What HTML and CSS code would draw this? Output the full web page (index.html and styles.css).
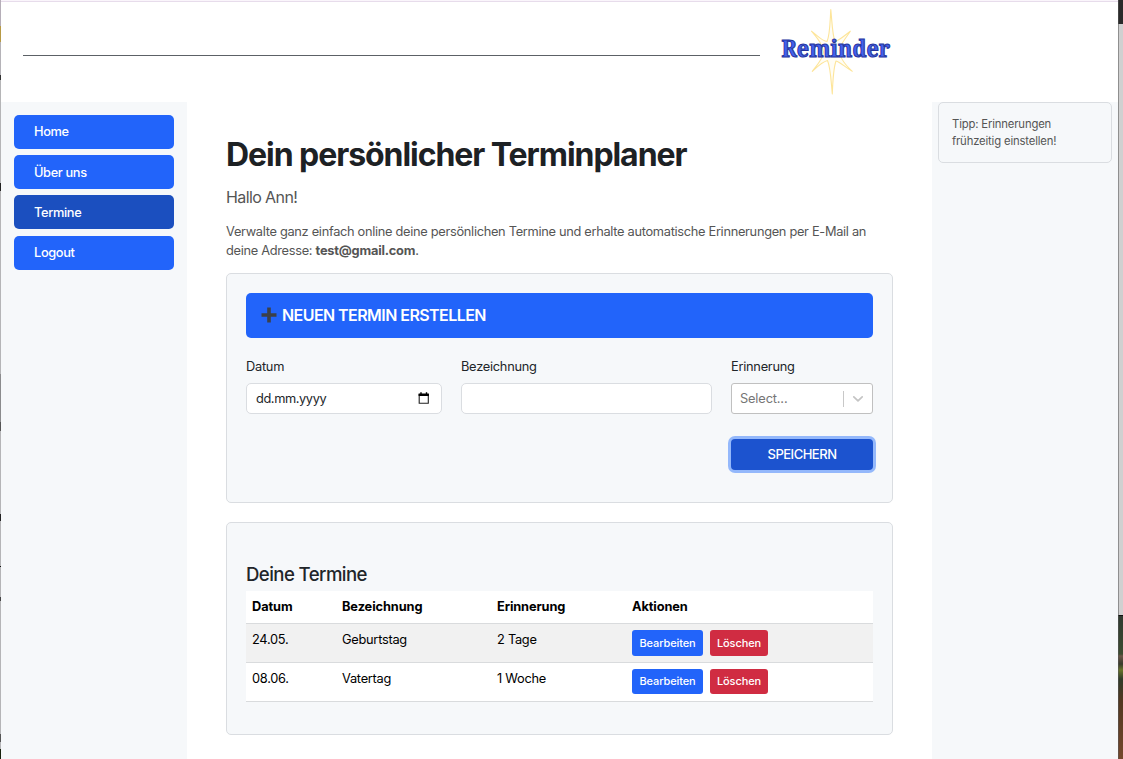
FILE: index.html
```html
<!DOCTYPE html>
<html lang="de">
<head>
<meta charset="utf-8">
<title>Reminder</title>
<link rel="stylesheet" href="styles.css">
</head>
<body>
<div class="edge-left"></div>
<div class="window">
  <header class="header">
    <div class="rule"></div>
    <svg class="logo" width="170" height="96" viewBox="770 4 170 96" role="img" aria-label="Reminder">
      <path class="star" d="M830.8 9.5C832 22 832.500 36 835 41.500C840 40 845 35 850.300 31.200C846 38 842 42 840 48C838.500 54 841 61 852.300 71.300C845 67 840 62 836 61C833.500 68 832.800 80 832.300 94C831 80 830.500 67 827.500 60.500C822 62 817 67 812.300 71.300C817 65 823 59 823.500 52C822 43 817 38 811.500 31.200C817 35 822 41 827 41.500C830 35 830 22 830.800 9.500Z"/>
      <text class="wordmark" x="781.5" y="57.300" textLength="108.500" lengthAdjust="spacingAndGlyphs">Reminder</text>
    </svg>
  </header>
  <div class="columns">
    <nav class="sidebar">
      <a class="nav-item">Home</a>
      <a class="nav-item">Über uns</a>
      <a class="nav-item active">Termine</a>
      <a class="nav-item">Logout</a>
    </nav>
    <main class="main">
      <h1 class="title">Dein persönlicher Terminplaner</h1>
      <p class="greeting">Hallo Ann!</p>
      <p class="intro">Verwalte ganz einfach online deine persönlichen Termine und erhalte automatische Erinnerungen per E-Mail an<br>deine Adresse: <strong>test@gmail.com</strong>.</p>
      <section class="card form-card">
        <div class="banner">
          <svg class="plus" width="16" height="16" viewBox="0 0 16 16"><path d="M6.200 .5h3.600v5.700h5.700v3.600H9.800v5.700H6.200V9.800H.5V6.200h5.700z"/></svg>
          <span class="banner-text">NEUEN TERMIN ERSTELLEN</span>
        </div>
        <div class="fields">
          <div class="field">
            <div class="label">Datum</div>
            <div class="input"><span class="date-text">dd.mm.yyyy</span>
              <svg width="12" height="13" viewBox="0 0 12 13"><path d="M1.200 2.500h9.100v8.800H1.200z" fill="none" stroke="#222" stroke-width="1.100"/><path d="M.6 1.500h10.300v2.600H.6zM2.300 .3h1.400v1.500H2.300zM7.800 .3h1.400v1.500H7.800z" fill="#000"/></svg>
            </div>
          </div>
          <div class="field">
            <div class="label">Bezeichnung</div>
            <div class="input"></div>
          </div>
          <div class="field">
            <div class="label">Erinnerung</div>
            <div class="select"><span class="placeholder">Select...</span><span class="divider"></span>
              <svg class="chevron" width="12" height="8" viewBox="0 0 12 8"><path d="M1.800 1.800L6 5.800l4.200-4" fill="none" stroke="#c4c4c4" stroke-width="1.700" stroke-linecap="round" stroke-linejoin="round"/></svg>
            </div>
          </div>
        </div>
        <div class="actions"><button class="save">SPEICHERN</button></div>
      </section>
      <section class="card list-card">
        <h2 class="subtitle">Deine Termine</h2>
        <div class="table">
          <div class="row head"><div>Datum</div><div>Bezeichnung</div><div>Erinnerung</div><div>Aktionen</div></div>
          <div class="row striped"><div>24.05.</div><div>Geburtstag</div><div>2 Tage</div><div class="buttons"><button class="btn edit">Bearbeiten</button><button class="btn delete">Löschen</button></div></div>
          <div class="row last"><div>08.06.</div><div>Vatertag</div><div>1 Woche</div><div class="buttons"><button class="btn edit">Bearbeiten</button><button class="btn delete">Löschen</button></div></div>
        </div>
      </section>
    </main>
    <aside class="aside"><div class="tip">Tipp: Erinnerungen<br>frühzeitig einstellen!</div></aside>
  </div>
</div>
<div class="edge-right"></div>
</body>
</html>
```
FILE: styles.css
```css
* { box-sizing: border-box; }
body {
  margin: 0;
  width: 1123px;
  height: 759px;
  overflow: hidden;
  display: flex;
  background: #fff;
  font-family: Inter, "Liberation Sans", sans-serif;
  font-size: 12.800px;
  line-height: 19px;
  letter-spacing: -0.26px;
  color: #212529;
}
h1, h2, p { margin: 0; }
button { font-family: inherit; border: 0; padding: 0; color: #fff; }

.edge-left {
  width: 1px;
  background: linear-gradient(#b5aeb8 26px, #b79a45 26px 42px, #b5b3b8 42px 75px, #333 75px 80px, #b5b5b7 80px 183px, #222 183px 191px, #b5b5b7 191px 374px, #8b8b8d 374px 422px, #555 422px 431px, #b5b5b7 431px 514px, #222 514px 521px, #b5b5b7 521px 566px, #111 566px 567px, #b5b5b7 567px 597px, #444 597px 601px, #b5b5b7 601px 734px, #555 734px 742px, #b5b5b7 742px 749px, #18220d 749px);
}
.edge-right {
  width: 5px;
  background: linear-gradient(#2a2a2a 24px, #d0d0d0 24px 615px, #111 615px 616px, #303a30 616px, #3d4c31 654px, #6b5647 656px, #383b2c 664px, #68742b 670px, #303c2a 679px, #513821 700px, #75482c 759px);
  border-left: 1px solid rgba(90, 90, 90, .55);
}
.window {
  width: 1117px;
  display: flex;
  flex-direction: column;
  border-top: 1px solid #faf5fb;
  box-shadow: inset 0 1px #e7dceb;
}
.header {
  height: 101px;
  flex: none;
  display: flex;
  align-items: flex-start;
  padding: 3px 0 0 22px;
}
.rule { width: 737px; height: 1px; margin: 51px 10px 0 0; background: #5c6166; }
.logo { flex: none; overflow: visible; }
.star { fill: #fffdf5; stroke: #fde59a; stroke-width: 1.1; stroke-linejoin: round; }
.wordmark {
  font-family: "Noto Serif", "DejaVu Serif Condensed", "DejaVu Serif", serif;
  font-size: 24px;
  font-weight: 700;
  letter-spacing: 0;
  fill: #4361ee;
  stroke: #25349c;
  stroke-width: 1.1;
}

.columns { flex: 1; display: grid; grid-template-columns: 186px 745px 186px; }
.sidebar {
  background: #f6f8fa;
  padding: 13px;
  display: flex;
  flex-direction: column;
  gap: 6px;
}
.nav-item {
  height: 34px;
  flex: none;
  padding: 7px 20px;
  border-radius: 5px;
  background: #2264fa;
  color: #fff;
  font-weight: 500;
  letter-spacing: -0.35px;
}
.nav-item:nth-child(2), .nav-item.active { padding-top: 8px; }
.nav-item:last-child { margin-top: 1px; }
.nav-item.active { background: #1b4fbf; }

.main { padding: 33px 39px 0; }
.title { font-size: 32px; line-height: 40px; font-weight: 700; letter-spacing: -1.06px; white-space: nowrap; color: #1d2124; }
.greeting { margin-top: 11px; font-size: 16px; line-height: 22px; letter-spacing: -0.6px; color: #555; }
.intro { margin-top: 14px; white-space: nowrap; color: #555; letter-spacing: -0.3px; }
.intro strong { font-weight: 700; letter-spacing: -0.2px; }

.card { width: 667px; border: 1px solid #dadde1; border-radius: 5px; background: #f6f8fa; padding: 19px; }
.form-card { margin-top: 13px; height: 230px; }
.banner {
  height: 45px;
  display: flex;
  align-items: center;
  gap: 5px;
  padding: 0 15px;
  border-radius: 5px;
  background: #2264fa;
  color: #fff;
  font-size: 16px;
  font-weight: 600;
}
.plus { fill: #3c4048; margin-bottom: 2px; }
.banner-text { letter-spacing: -0.56px; white-space: nowrap; }
.fields { display: grid; grid-template-columns: 196px 251px 142px; gap: 19px; margin-top: 19px; }
.label { margin-bottom: 7px; }
.input, .select { height: 31px; background: #fff; border: 1px solid #dadde1; border-radius: 5px; display: flex; align-items: center; }
.input { justify-content: space-between; padding: 0 11px 0 9px; }
.date-text { letter-spacing: -0.4px; }
.select { border-color: #c0c0c0; border-radius: 3px; padding-left: 8px; color: #757575; }
.placeholder { letter-spacing: -0.15px; }
.divider { width: 1px; height: 16px; margin-left: auto; background: #c8c8c8; }
.chevron { margin: 0 8px; }
.actions { display: flex; justify-content: flex-end; margin-top: 25px; }
.save {
  width: 142px;
  height: 31px;
  padding-bottom: 1px;
  border-radius: 4px;
  background: #1c53cf;
  box-shadow: 0 0 0 3px #94b8fb;
  font-size: 13px;
  font-weight: 500;
  letter-spacing: -0.5px;
}

.list-card { margin-top: 19px; height: 213px; }
.subtitle { margin-top: 20px; font-size: 18.600px; line-height: 25px; font-weight: 500; letter-spacing: -0.58px; }
.table { margin-top: 4px; color: #000; }
.row {
  display: grid;
  grid-template-columns: 90px 155px 135px 1fr;
  height: 39px;
  padding: 6px 6px 0;
  background: #fff;
  border-bottom: 1px solid #d9dbdd;
}
.row.head { height: 33px; font-weight: 700; letter-spacing: -0.1px; }
.row.striped { background: #f1f1f1; }
.buttons { display: flex; gap: 7px; }
.btn { height: 26px; border-radius: 3px; font-size: 11px; font-weight: 500; letter-spacing: -0.1px; }
.last .btn { height: 25px; padding-bottom: 1px; }
.edit { width: 71px; background: #2264fa; }
.delete { width: 58px; background: #d02c42; }

.aside { background: #f6f8fa; padding: 0 6px; }
.tip {
  height: 61px;
  padding: 13px;
  border: 1px solid #dadde1;
  border-radius: 5px;
  color: #555;
  font-size: 11.300px;
  line-height: 17px;
  letter-spacing: -0.16px;
}
```
